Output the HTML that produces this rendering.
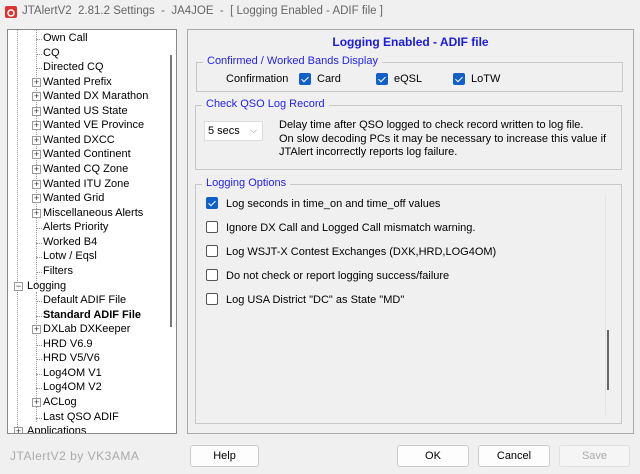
<!DOCTYPE html>
<html><head><meta charset="utf-8"><style>
*{margin:0;padding:0;box-sizing:border-box}
body{width:640px;height:474px;background:#f0f0f0;font-family:"Liberation Sans",sans-serif;font-size:11px;color:#000;position:relative;overflow:hidden}
.a{position:absolute;white-space:nowrap}
.title{left:0;top:0;width:640px;height:24px;background:#f0f0f0;color:#666;font-size:11.5px}
.tree{left:7px;top:29px;width:170px;height:405px;background:#fff;border:1px solid #888;overflow:hidden}
.it{position:absolute;left:35px;font-size:11px;line-height:13px}
.pl{position:absolute;left:24px;width:9px;height:9px;border:1px solid #999;background:#fff;font-size:9px;line-height:7px;text-align:center;color:#333}
.dash{position:absolute;left:28px;width:6px;border-top:1px dotted #999}
.panel{left:187px;top:29px;width:447px;height:405px;border:1px solid #aaa}
.grp{position:absolute;border:1px solid #c8c8c8}
.grp>.lg{position:absolute;top:-8px;left:6px;background:#f0f0f0;padding:0 4px;color:#2222ee;font-size:11px}
.cb{position:absolute;width:12px;height:12px;border:1px solid #555;border-radius:2px;background:#fff}
.cb.on{background:#1060c8;border-color:#1060c8}
.cb.on:after{content:"";position:absolute;left:3px;top:1px;width:3px;height:6px;border:solid #fff;border-width:0 1px 1px 0;transform:rotate(45deg)}
.btn{position:absolute;top:445px;height:22px;border:1px solid #ccc;border-radius:3px;background:#fdfdfd;text-align:center;line-height:20px;font-size:11px}
</style></head><body>
<div class="a title"><svg style="position:absolute;left:4px;top:5px" width="14" height="14"><rect x="1" y="1" width="12" height="12" rx="2" fill="#d33"/><circle cx="7" cy="8" r="3" fill="none" stroke="#fff" stroke-width="1.5"/></svg><span style="position:absolute;left:22px;top:5px">JTAlertV2&nbsp; 2.81.2 Settings&nbsp; -&nbsp; JA4JOE&nbsp; -&nbsp; [ Logging Enabled - ADIF file ]</span></div>
<div class="a tree">
<div style="position:absolute;left:9px;top:0;height:405px;border-left:1px dotted #999"></div>
<div style="position:absolute;left:28px;top:0;height:255px;border-left:1px dotted #999"></div>
<div style="position:absolute;left:28px;top:262px;height:130px;border-left:1px dotted #999"></div>
<div style="position:absolute;left:162px;top:25px;width:2px;height:272px;background:#777"></div>
<div id="t"></div>
</div>
<script>
var items=[["Own Call",0],["CQ",0],["Directed CQ",0],["Wanted Prefix",1],["Wanted DX Marathon",1],["Wanted US State",1],["Wanted VE Province",1],["Wanted DXCC",1],["Wanted Continent",1],["Wanted CQ Zone",1],["Wanted ITU Zone",1],["Wanted Grid",1],["Miscellaneous Alerts",1],["Alerts Priority",0],["Worked B4",0],["Lotw / Eqsl",0],["Filters",0],["Logging",2],["Default ADIF File",0],["Standard ADIF File",3],["DXLab DXKeeper",1],["HRD V6.9",0],["HRD V5/V6",0],["Log4OM V1",0],["Log4OM V2",0],["ACLog",1],["Last QSO ADIF",0],["Applications",4]];
var h="";items.forEach(function(x,i){var y=2+i*14.56;var top=x[1]==2||x[1]==4;var l=top?19:35;var pl=top?6:24;
if(x[1]==1||x[1]==2||x[1]==4)h+='<div class="pl" style="left:'+pl+'px;top:'+(y+2)+'px">'+(x[1]==2?'−':'+')+'</div>';
else h+='<div class="dash" style="top:'+(y+7)+'px"></div>';
h+='<div class="it" style="left:'+l+'px;top:'+y+'px;'+(x[1]==3?'font-weight:bold;':'')+'">'+x[0]+'</div>';});
document.getElementById("t").innerHTML=h;
</script>
<div class="a panel">
<div class="a" style="left:0;width:445px;top:5px;text-align:center;color:#1a1ae0;font-weight:bold;font-size:12px">Logging Enabled - ADIF file</div>
<div class="grp" style="left:8px;top:32px;width:427px;height:30px"><span class="lg">Confirmed / Worked Bands Display</span>
<span class="a" style="left:29px;top:10px">Confirmation</span>
<div class="cb on" style="left:102px;top:10px"></div><span class="a" style="left:120px;top:10px">Card</span>
<div class="cb on" style="left:179px;top:10px"></div><span class="a" style="left:197px;top:10px">eQSL</span>
<div class="cb on" style="left:256px;top:10px"></div><span class="a" style="left:274px;top:10px">LoTW</span></div>
<div class="grp" style="left:7px;top:75px;width:427px;height:65px"><span class="lg">Check QSO Log Record</span>
<div class="a" style="left:8px;top:15px;width:59px;height:20px;background:#fff;border:1px solid #ddd;padding:3px 3px">5 secs<span style="position:absolute;right:5px;top:3px;color:#888;font-size:9px">⌵</span></div>
<div class="a" style="left:83px;top:13px;line-height:13.5px">Delay time after QSO logged to check record written to log file.<br>On slow decoding PCs it may be necessary to increase this value if<br>JTAlert incorrectly reports log failure.</div></div>
<div class="grp" style="left:7px;top:154px;width:427px;height:240px"><span class="lg">Logging Options</span>
<div class="a" style="left:409px;top:10px;height:220px;border-left:1px solid #e4e4e4"></div>
<div class="a" style="left:411px;top:145px;width:2px;height:60px;background:#666"></div>
<div class="cb on" style="left:10px;top:12px"></div><span class="a" style="left:30px;top:13px">Log seconds in time_on and time_off values</span>
<div class="cb" style="left:10px;top:36px"></div><span class="a" style="left:30px;top:37px">Ignore DX Call and Logged Call mismatch warning.</span>
<div class="cb" style="left:10px;top:60px"></div><span class="a" style="left:30px;top:61px">Log WSJT-X Contest Exchanges (DXK,HRD,LOG4OM)</span>
<div class="cb" style="left:10px;top:84px"></div><span class="a" style="left:30px;top:85px">Do not check or report logging success/failure</span>
<div class="cb" style="left:10px;top:108px"></div><span class="a" style="left:30px;top:109px">Log USA District "DC" as State "MD"</span>
</div></div>
<div class="a" style="left:10px;top:449px;color:#aaa;font-size:12px;letter-spacing:.5px">JTAlertV2 by VK3AMA</div>
<div class="btn" style="left:190px;width:69px">Help</div>
<div class="btn" style="left:397px;width:72px">OK</div>
<div class="btn" style="left:478px;width:72px">Cancel</div>
<div class="btn" style="left:559px;width:71px;color:#aaa;background:#f5f5f5;border-color:#e0e0e0">Save</div>
</body></html>
